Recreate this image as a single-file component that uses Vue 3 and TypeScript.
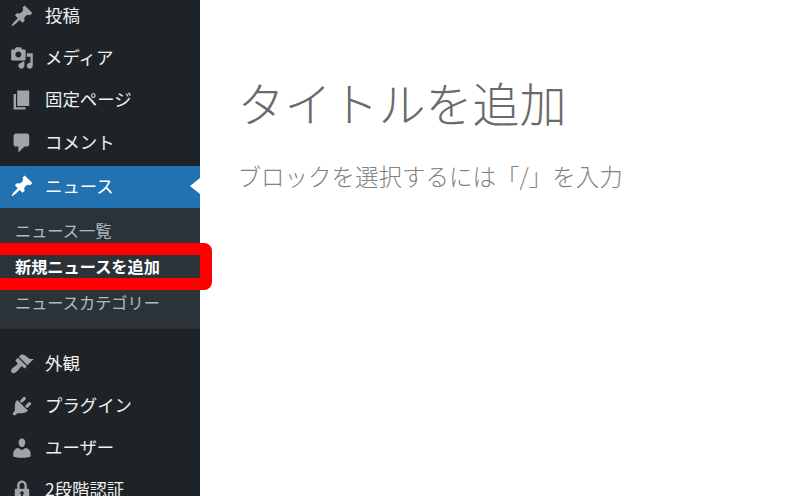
<template>
  <div class="page">
    <aside class="sidebar">
      <ul class="menu upper">
        <li v-for="item in topItems" :key="item.label" class="menu-item">
          <svg class="icon" viewBox="0 0 20 20"><path :d="item.icon" /></svg>
          <span>{{ item.label }}</span>
        </li>
      </ul>
      <ul class="menu">
        <li class="menu-item current">
          <svg class="icon" viewBox="0 0 20 20"><path :d="pin" /></svg>
          <span>ニュース</span>
        </li>
      </ul>
      <ul class="submenu">
        <li>ニュース一覧</li>
        <li class="active">新規ニュースを追加</li>
        <li>ニュースカテゴリー</li>
      </ul>
      <ul class="menu lower">
        <li v-for="item in bottomItems" :key="item.label" class="menu-item">
          <svg class="icon" viewBox="0 0 20 20"><path :d="item.icon" /></svg>
          <span>{{ item.label }}</span>
        </li>
      </ul>
      <!-- 赤枠の注釈 -->
      <div class="highlight"></div>
    </aside>

    <main class="editor">
      <h1 class="title">タイトルを追加</h1>
      <p class="placeholder">ブロックを選択するには「/」を入力</p>
    </main>
  </div>
</template>

<script setup lang="ts">
interface MenuItem {
  label: string
  icon: string
}

const pin = 'M10.44 3.02l1.82-1.82 6.36 6.35-1.83 1.82c-1.05-.68-2.48-.57-3.41.36l-.75.75c-.92.93-1.04 2.35-.35 3.41l-1.83 1.82-2.41-2.41-2.8 2.79c-.42.42-3.38 2.71-3.8 2.29s1.86-3.39 2.28-3.81l2.79-2.79L4.1 9.36l1.83-1.82c1.05.69 2.48.57 3.4-.36l.75-.75c.93-.92 1.05-2.35.36-3.41z'

const topItems: MenuItem[] = [
  { label: '投稿', icon: pin },
  {
    label: 'メディア',
    icon: 'M13 11V4c0-.55-.45-1-1-1h-1.67L9 1H5L3.67 3H2c-.55 0-1 .45-1 1v7c0 .55.45 1 1 1h10c.55 0 1-.45 1-1zM7 4.5c1.38 0 2.5 1.12 2.5 2.5S8.38 9.5 7 9.5 4.5 8.38 4.5 7 5.62 4.5 7 4.5zM14 6h5v10.5c0 1.38-1.12 2.5-2.5 2.5S14 17.88 14 16.5s1.12-2.5 2.5-2.5c.17 0 .34.02.5.05V9h-3V6zm-4 8.05V13h2v3.5c0 1.38-1.12 2.5-2.5 2.5S7 17.88 7 16.5 8.12 14 9.5 14c.17 0 .34.02.5.05z'
  },
  { label: '固定ページ', icon: 'M6 15V2h10v13H6zm-1 1h8v2H3V5h2v11z' },
  {
    label: 'コメント',
    icon: 'M5 2h9c1.1 0 2 .9 2 2v7c0 1.1-.9 2-2 2h-2l-5 5v-5H5c-1.1 0-2-.9-2-2V4c0-1.1.9-2 2-2z'
  }
]

const bottomItems: MenuItem[] = [
  {
    label: '外観',
    icon: 'M14.48 11.06L7.41 3.99l1.5-1.5c.5-.56 2.3-.47 3.51.32 1.21.8 1.43 1.28 2.91 2.1 1.18.64 2.45 1.26 4.45.85zm-.71.71L6.7 4.7 4.93 6.47c-.39.39-.39 1.02 0 1.41l1.06 1.06c.39.39.39 1.03 0 1.42-.6.6-1.43 1.11-2.21 1.69-.35.26-.7.53-1.01.84C1.43 13.73.43 15.18 1 16.5c.13.18.34.42.59.67.1.1.2.2.31.3l.1.1c1.32.57 2.77-.43 4.63-2.11.31-.31.58-.66.84-1.01.58-.78 1.09-1.61 1.69-2.21.39-.39 1.03-.39 1.42 0l1.06 1.06c.39.39 1.02.39 1.41 0z'
  },
  {
    label: 'プラグイン',
    icon: 'M13.11 4.36L9.87 7.6 8 5.73l3.24-3.24c.35-.34 1.05-.2 1.56.32.52.51.66 1.21.31 1.55zm-8 1.77l.91-1.12 9.01 9.01-1.19.84c-.71.71-2.63 1.16-3.82 1.16H6.14L4.9 17.26c-.59.59-1.54.59-2.12 0-.59-.58-.59-1.53 0-2.12l1.24-1.24v-3.88c0-1.13.4-3.19 1.09-3.89zm7.26 3.97l3.24-3.24c.34-.35 1.04-.21 1.55.31.52.51.66 1.21.31 1.55l-3.24 3.25z'
  },
  {
    label: 'ユーザー',
    icon: 'M10 9.25c-2.27 0-2.73-3.44-2.73-3.44C7 4.02 7.82 2 9.97 2c2.16 0 2.98 2.02 2.71 3.81 0 0-.41 3.44-2.68 3.44zm0 2.57L12.72 10c2.39 0 4.52 2.33 4.52 4.53v2.49s-3.65 1.13-7.24 1.13c-3.65 0-7.24-1.13-7.24-1.13v-2.49c0-2.25 1.94-4.48 4.15-4.48z'
  },
  {
    label: '2段階認証',
    icon: 'M14 9h1c.55 0 1 .45 1 1v7c0 .55-.45 1-1 1H5c-.55 0-1-.45-1-1v-7c0-.55.45-1 1-1h1V6c0-2.21 1.79-4 4-4s4 1.79 4 4v3zm-2 0V6c0-1.1-.9-2-2-2s-2 .9-2 2v3h4zm-1 7l-.36-2.15c.51-.24.86-.75.86-1.35 0-.83-.67-1.5-1.5-1.5s-1.5.67-1.5 1.5c0 .6.35 1.11.86 1.35L9 16h2z'
  }
]
</script>

<style>
html,
body {
  margin: 0;
  padding: 0;
  height: 100%;
  overflow: hidden;
  background: #fff;
}
</style>

<style scoped>
.page {
  display: flex;
  width: 790px;
  height: 496px;
  overflow: hidden;
  font-family: "Noto Sans CJK JP", "Liberation Sans", sans-serif;
}

.sidebar {
  position: relative;
  flex: 0 0 200px;
  height: 496px;
  background: #1d2327;
}

ul {
  list-style: none;
  margin: 0;
  padding: 0;
}

.menu.upper {
  margin-top: -7px;
  margin-bottom: 3.4px;
}

.menu.upper .menu-item {
  height: 42.4px;
}

.menu.upper .icon {
  margin-top: 3px;
}

.menu.lower {
  margin-top: 13px;
}

.menu.lower .menu-item {
  box-sizing: border-box;
  padding-bottom: 1px;
}

.menu.lower .icon {
  margin-top: 4px;
}

.menu-item {
  position: relative;
  display: flex;
  align-items: center;
  height: 42px;
  padding-left: 10px;
  color: #f0f0f1;
  font-size: 17.4px;
  gap: 11px;
}

.icon {
  width: 24px;
  height: 24px;
  flex: none;
  fill: #a0a5aa;
}

.menu-item.current {
  box-sizing: border-box;
  padding-bottom: 3px;
  background: #2271b1;
  color: #fff;
}

.menu-item.current .icon {
  margin-top: 2px;
  fill: #fff;
}

.menu-item.current::after {
  content: "";
  position: absolute;
  right: 0;
  top: 12px;
  border: 8px solid transparent;
  border-left: 0;
  border-right: 10px solid #fff;
}

.submenu {
  height: 121px;
  box-sizing: border-box;
  padding: 5.5px 0 0 15px;
  background: #2c3338;
  color: rgba(240, 246, 252, 0.7);
  font-size: 16.2px;
}

.submenu li {
  height: 35.6px;
  line-height: 35.6px;
}

.submenu .active {
  color: #fff;
  font-weight: 700;
}

.highlight {
  position: absolute;
  left: -20px;
  top: 243px;
  width: 208px;
  height: 23px;
  border: 12px solid #ff0000;
  border-radius: 8px;
}

.editor {
  flex: 1;
  padding: 67px 0 0 37.5px;
}

.title {
  margin: 0;
  font-size: 47px;
  font-weight: 300;
  line-height: 70px;
  color: #6a6a6a;
}

.placeholder {
  margin: 22px 0 0;
  font-size: 23.5px;
  font-weight: 300;
  line-height: 34px;
  color: #828282;
}
</style>
